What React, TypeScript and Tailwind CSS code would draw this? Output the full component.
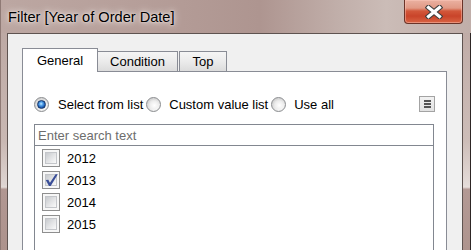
import React from "react";

const Radio = ({ checked }: { checked?: boolean }) => (
  <span className="relative flex w-[15px] h-[15px] shrink-0 items-center justify-center rounded-full border border-[#8a8c8f] bg-[radial-gradient(circle_at_60%_65%,#ffffff_0%,#f0f0f0_35%,#d2d2d2_75%,#c2c2c2_100%)]">
    {checked ? (
      <span className="block w-[9px] h-[9px] rounded-full border border-[#17386b] bg-[radial-gradient(circle_at_45%_40%,#c7ecff_0%,#5aa9ef_28%,#1f5fb5_62%,#133b7c_100%)]" />
    ) : (
      <span className="block w-[9px] h-[9px] rounded-full bg-[radial-gradient(circle_at_60%_60%,#ffffff_0%,#eeeeee_55%,#d8d8d8_100%)]" />
    )}
  </span>
);

const Checkbox = ({ checked }: { checked?: boolean }) => (
  <span className="relative flex w-[18px] h-[18px] shrink-0 border border-[#8e8e8e] bg-[#f7f7f7] p-[2px]">
    <span className="block w-full h-full border border-[#c4c6ca] bg-[linear-gradient(135deg,#c8cace_0%,#e2e3e5_50%,#fafafa_100%)]" />
    {checked && (
      <svg
        className="absolute left-0 top-0"
        width="16"
        height="16"
        viewBox="0 0 15 15"
      >
        <path
          d="M2.6 7.6 L5 7.3 L6.5 10 L11.8 2 L13.9 2.2 L7.2 13.2 L5.6 13.2 Z"
          fill="#3a4e98"
        />
      </svg>
    )}
  </span>
);

export default function App() {
  const years = [
    { y: "2012", c: false },
    { y: "2013", c: true },
    { y: "2014", c: false },
    { y: "2015", c: false },
  ];
  return (
    <div className="w-[471px] h-[250px] overflow-hidden flex flex-col font-['Liberation_Sans',Arial,sans-serif] text-black bg-[#b8a39e]">
      {/* title bar */}
      <div className="h-[33px] shrink-0 flex items-start border-l border-[#8f7a75] bg-[linear-gradient(to_right,#bca7a2_0%,#b7a09b_25%,#ae9590_55%,#c1afaa_72%,#cbbcb7_82%,#c0aea9_100%)]">
        <span className="pl-[7px] pt-[10px] text-[14.6px] leading-none [text-shadow:0_0_9px_#ece4e1,0_0_5px_#ece4e1,0_0_2px_#ece4e1]">
          Filter [Year of Order Date]
        </span>
        <div className="ml-auto mr-[8px] w-[59px] h-[24px] rounded-b-[4px] border border-t-0 border-[#6a3328] bg-[linear-gradient(to_bottom,#eab1a1_0%,#e19985_35%,#d2573a_48%,#c9442a_70%,#d96444_100%)] shadow-[inset_0_0_0_1px_rgba(255,205,190,0.45)] flex items-center justify-center">
          <svg width="18" height="14" viewBox="0 0 18 14">
            <path
              d="M3.5 2.5 L14.5 11.5 M14.5 2.5 L3.5 11.5"
              stroke="#3e3e3e"
              strokeWidth="5.4"
              strokeLinecap="square"
            />
            <path
              d="M3.5 2.5 L14.5 11.5 M14.5 2.5 L3.5 11.5"
              stroke="#ffffff"
              strokeWidth="3.2"
              strokeLinecap="square"
            />
          </svg>
        </div>
      </div>

      {/* body */}
      <div className="flex flex-1 min-h-0">
        <div className="w-[7px] shrink-0 border-l border-[#8f7a75] bg-[linear-gradient(to_bottom,#bda9a4_0%,#c9b8b3_50%,#ded4d1_70%,#e3dad7_71%,#b19792_72%,#ad938d_100%)]" />

        <div className="w-[456px] shrink-0 border-l border-t border-r border-[#5e5350] bg-[#f0f0f0] pl-[14px] pt-[14px] flex flex-col">
          {/* tabs */}
          <div className="flex items-end h-[23px] shrink-0 text-[13px] leading-[13px]">
            <div className="relative z-10 w-[76px] h-[24px] mb-[-1px] bg-white border-l border-t border-r border-[#898c95] flex items-center justify-center">
              General
            </div>
            <div className="ml-[-1px] w-[81px] h-[20px] border-l border-t border-r border-[#898c95] bg-[linear-gradient(to_bottom,#f5f5f5_0%,#ebebeb_50%,#dcdcdc_100%)] flex items-center justify-center">
              Condition
            </div>
            <div className="ml-[1px] w-[48px] h-[20px] border-l border-t border-r border-[#898c95] bg-[linear-gradient(to_bottom,#f5f5f5_0%,#ebebeb_50%,#dcdcdc_100%)] flex items-center justify-center">
              Top
            </div>
          </div>

          {/* panel */}
          <div className="w-[425px] h-[200px] shrink-0 border border-[#898c95] bg-white flex flex-col text-[13px] leading-[13px]">
            <div className="mt-[25px] h-[14px] flex items-center pl-[11px]">
              <Radio checked />
              <span className="ml-[9px]">Select from list</span>
              <span className="ml-[3px]">
                <Radio />
              </span>
              <span className="ml-[8px]">Custom value list</span>
              <span className="ml-[3px]">
                <Radio />
              </span>
              <span className="ml-[8px]">Use all</span>
              <div className="ml-auto mr-[11px] w-[16px] h-[16px] border border-[#a3a3a3] bg-[linear-gradient(to_bottom,#f2f2f2,#e2e2e2)] flex flex-col items-center justify-center gap-[1px]">
                <span className="block w-[7px] h-[2px] bg-[#555555]" />
                <span className="block w-[7px] h-[2px] bg-[#555555]" />
                <span className="block w-[7px] h-[2px] bg-[#555555]" />
              </div>
            </div>

            <div className="mt-[13px] ml-[11px] w-[400px] flex-1 flex flex-col">
              <div className="h-[22px] border border-[#828790] flex items-center pl-[3px] text-[#6d6d6d]">
                Enter search text
              </div>
              <div className="flex-1 border-l border-r border-[#828790] pt-[1px]">
                {years.map((r) => (
                  <div key={r.y} className="h-[22px] flex items-center pl-[7px]">
                    <Checkbox checked={r.c} />
                    <span className="ml-[7px]">{r.y}</span>
                  </div>
                ))}
              </div>
            </div>
          </div>
        </div>

        <div className="w-[8px] shrink-0 border-r border-[#2e2625] bg-[linear-gradient(to_bottom,#c0aca7_0%,#cdbdb8_50%,#e4dbd8_70%,#e8dfdc_71%,#b39994_72%,#ae948e_100%)]" />
      </div>
    </div>
  );
}
